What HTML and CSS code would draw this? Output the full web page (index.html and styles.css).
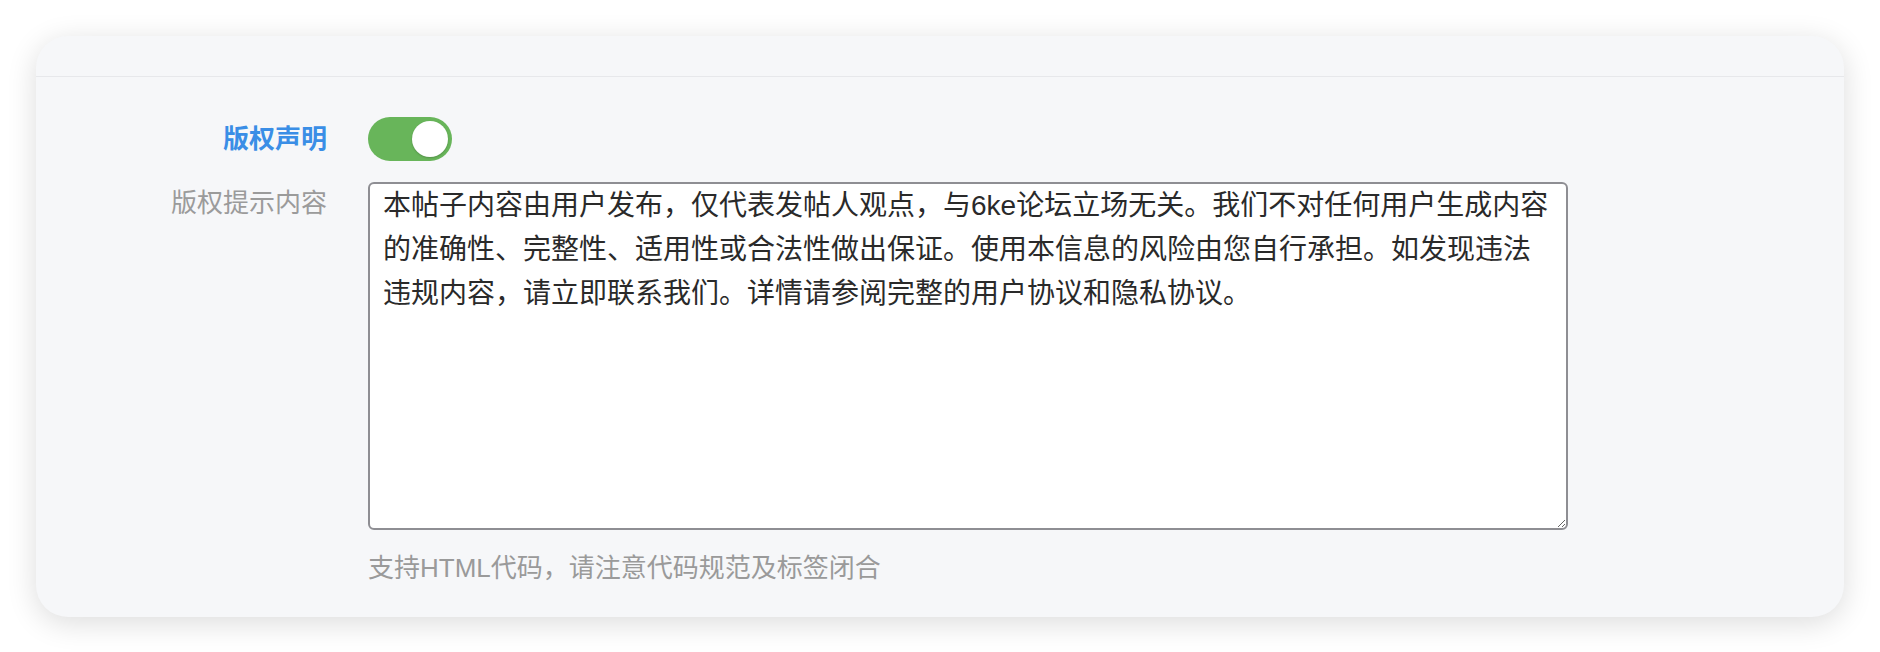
FILE: index.html
```html
<!doctype html>
<html lang="zh-CN">
	<head>
		<meta charset="utf-8">
		<title>版权声明设置</title>
		<link rel="stylesheet" href="styles.css">
	</head>
	<body>
		<!-- Settings card -->
		<div class="card">
			<div class="card-head"></div>

			<div class="card-body">
				<!-- Copyright switch -->
				<div class="form-row switch-row">
					<label class="field-label active">版权声明</label>
					<div class="field">
						<span class="switch on"><span class="knob"></span></span>
					</div>
				</div>

				<!-- Copyright notice text -->
				<div class="form-row text-row">
					<label class="field-label" for="notice">版权提示内容</label>
					<div class="field">
						<textarea id="notice" class="notice">本帖子内容由用户发布，仅代表发帖人观点，与6ke论坛立场无关。我们不对任何用户生成内容的准确性、完整性、适用性或合法性做出保证。使用本信息的风险由您自行承担。如发现违法违规内容，请立即联系我们。详情请参阅完整的用户协议和隐私协议。</textarea>
						<p class="help">支持HTML代码，请注意代码规范及标签闭合</p>
					</div>
				</div>
			</div>
		</div>
	</body>
</html>
```

FILE: styles.css
```css
/* Page setup */

body {
	margin: 0;
	padding: 36px;
	background-color: white;
	font-family: "Liberation Sans", "Noto Sans CJK SC", sans-serif;
}

/* The card */

.card {
	background: #f6f7f9;
	border-radius: 32px;
	box-shadow: 0 6px 30px rgba(0, 0, 0, 0.14);
	height: 581px;
	box-sizing: border-box;
}

.card-head {
	height: 40px;
	border-bottom: 1px solid #e7e8eb;
}

.card-body {
	padding-top: 40px;
	display: flex;
	flex-direction: column;
	gap: 21px;
}

/* Form rows: label column + field column */

.form-row {
	display: grid;
	grid-template-columns: 291px 1200px;
	column-gap: 41px;
}

.switch-row { align-items: center; }

.field-label {
	text-align: right;
	font-size: 26px;
	line-height: 36px;
	color: #9b9b9b;
}

.field-label.active {
	color: #3a8ee6;
	font-weight: bold;
}

.text-row .field-label { padding-top: 3px; }

/* Toggle switch */

.switch {
	display: block;
	width: 84px;
	height: 44px;
	border-radius: 22px;
	background: #c8c9cc;
	position: relative;
}

.switch.on { background: #68b55a; }

.switch .knob {
	position: absolute;
	top: 4px;
	left: 4px;
	width: 36px;
	height: 36px;
	border-radius: 50%;
	background: white;
	box-shadow: 0 1px 2px rgba(0, 0, 0, 0.2);
}

.switch.on .knob { left: 44px; }

/* Notice textarea */

.notice {
	display: block;
	width: 1200px;
	height: 348px;
	box-sizing: border-box;
	margin: 0;
	padding: 0 13px;
	border: 2px solid #8e8e93;
	border-radius: 6px;
	background: white;
	color: #2a2a2a;
	font-family: "Liberation Sans", "Noto Sans CJK SC", sans-serif;
	font-size: 28px;
	line-height: 44px;
	outline: none;
}

.help {
	margin: 20px 0 0;
	font-size: 26px;
	line-height: 36px;
	color: #9a9a9a;
}
```
